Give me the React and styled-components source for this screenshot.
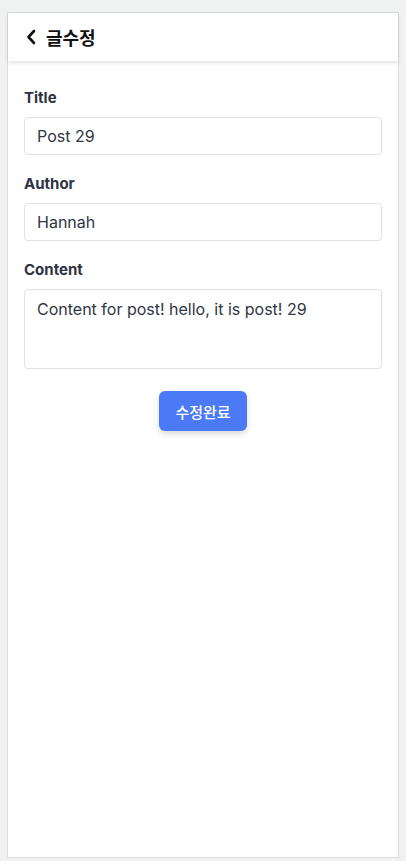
import React from 'react';
import styled, { createGlobalStyle } from 'styled-components';

const GlobalStyle = createGlobalStyle`
  html, body {
    margin: 0;
    padding: 0;
    background: #f0f1f1;
    font-family: Inter, "Noto Sans", "Noto Sans CJK KR", sans-serif;
  }
  * { box-sizing: border-box; }
`;

const Page = styled.div`
  padding: 12px 7px 3px 7px;
  height: 861px;
`;

const Card = styled.div`
  height: 846px;
  background: #fff;
  border: 1px solid #dcdcdc;
  display: flex;
  flex-direction: column;
`;

const Header = styled.header`
  height: 48px;
  display: flex;
  align-items: center;
  gap: 8px;
  padding: 0 16px;
  background: #fff;
  box-shadow: 0 2px 4px rgba(0, 0, 0, 0.12);
`;

const BackButton = styled.button`
  border: none;
  background: none;
  padding: 0;
  width: 14px;
  height: 20px;
  display: flex;
  align-items: center;
  justify-content: center;
  color: #111;
`;

const HeaderTitle = styled.h1`
  margin: 0;
  font-size: 18px;
  font-weight: 700;
  color: #111;
  font-family: "Noto Sans CJK KR", sans-serif;
`;

const Form = styled.form`
  padding: 27px 16px 0 16px;
  display: flex;
  flex-direction: column;
`;

const Field = styled.div`
  display: flex;
  flex-direction: column;
  margin-bottom: ${p => p.$gap || 19}px;
`;

const Label = styled.label`
  font-size: 15px;
  line-height: 20px;
  font-weight: 700;
  color: #2d3342;
  margin-bottom: 9px;
`;

const Input = styled.input`
  height: 38px;
  width: 100%;
  border: 1px solid #dfe1e6;
  border-radius: 4px;
  padding: 0 12px;
  font-size: 16px;
  font-family: Inter, "Noto Sans", sans-serif;
  color: #2f3644;
  outline: none;
`;

const TextArea = styled.textarea`
  height: 80px;
  width: 100%;
  border: 1px solid #dfe1e6;
  border-radius: 4px;
  padding: 8px 12px;
  font-size: 16px;
  line-height: 22px;
  font-family: Inter, "Noto Sans", sans-serif;
  color: #2f3644;
  resize: none;
  outline: none;
`;

const SubmitButton = styled.button`
  align-self: center;
  width: 88px;
  height: 40px;
  border: none;
  border-radius: 6px;
  background: #4c79f5;
  color: #fff;
  font-size: 15px;
  font-weight: 500;
  font-family: "Noto Sans CJK KR", sans-serif;
  box-shadow: 0 3px 6px rgba(0, 0, 0, 0.15);
`;

const App = () => {
    return (
        <Page>
            <GlobalStyle />
            <Card>
                <Header>
                    <BackButton aria-label="back">
                        <svg width="10" height="16" viewBox="0 0 10 16" fill="none">
                            <path d="M8 2 L2.5 8 L8 14" stroke="#111" strokeWidth="2.6" strokeLinecap="round" strokeLinejoin="round" />
                        </svg>
                    </BackButton>
                    <HeaderTitle>글수정</HeaderTitle>
                </Header>
                <Form>
                    <Field>
                        <Label>Title</Label>
                        <Input defaultValue="Post 29" />
                    </Field>
                    <Field>
                        <Label>Author</Label>
                        <Input defaultValue="Hannah" />
                    </Field>
                    <Field $gap={22}>
                        <Label>Content</Label>
                        <TextArea defaultValue="Content for post! hello, it is post! 29" />
                    </Field>
                    <SubmitButton type="button">수정완료</SubmitButton>
                </Form>
            </Card>
        </Page>
    );
};

export default App;
